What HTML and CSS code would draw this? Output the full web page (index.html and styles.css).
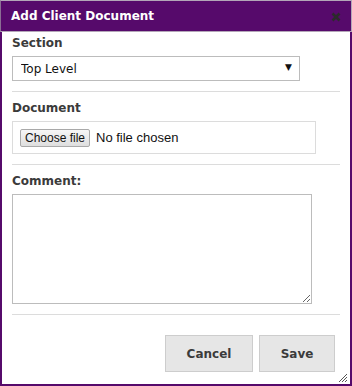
FILE: index.html
```html
<!DOCTYPE html>
<html lang="en">
<head>
    <meta charset="UTF-8">
    <meta name="viewport" content="width=device-width, initial-scale=1.0">
    <title>Add Client Document</title>
    <link rel="stylesheet" href="styles.css">
</head>
<body>

<div class="dialog">
    <div class="dialog-header">
        <span class="dialog-title">Add Client Document</span>
        <svg class="close" width="10" height="10" viewBox="0 0 10 10">
            <path d="M1.5 1.5 L8.5 8.5 M8.5 1.5 L1.5 8.5" stroke="#2b2b2b" stroke-width="2.6" stroke-linecap="butt"/>
        </svg>
    </div>

    <div class="dialog-body">
        <div class="field first">
            <label for="section">Section</label>
            <div class="select-wrap">
                <select id="section">
                    <option>Top Level</option>
                </select>
            </div>
        </div>

        <hr>

        <div class="field">
            <label for="document">Document</label>
            <div class="file-box">
                <button class="file-btn" id="document">Choose file</button>
                <span class="file-name">No file chosen</span>
            </div>
        </div>

        <hr>

        <div class="field">
            <label for="comment">Comment:</label>
            <textarea id="comment"></textarea>
        </div>

        <hr>

        <div class="buttons">
            <button class="btn">Cancel</button>
            <button class="btn">Save</button>
        </div>
    </div>

    <svg class="grip" width="10" height="10" viewBox="0 0 10 10">
        <path d="M1 9 L9 1 M4 9 L9 4 M7 9 L9 7" stroke="#555" stroke-width="1" fill="none"/>
    </svg>
</div>

</body>
</html>
```

FILE: styles.css
```css
* {
    margin: 0;
    padding: 0;
    box-sizing: border-box;
}

body {
    font-family: "DejaVu Sans", Verdana, sans-serif;
    background: #fff;
}

.dialog {
    position: relative;
    width: 352px;
    height: 386px;
    border: 2px solid #560a6b;
    border-top: 0;
    background: #fff;
}

.dialog-header {
    display: flex;
    justify-content: space-between;
    align-items: center;
    height: 32px;
    margin: 0 -2px;
    padding: 0 10px 0 10px;
    background: #560a6b;
    border: 1px solid #b3a6b8;
    border-left-color: #8a6e94;
}

.dialog-title {
    color: #fff;
    font-size: 12px;
    font-weight: bold;
}

.close {
    display: block;
    margin-top: 1px;
}

.dialog-body {
    padding: 3px 10px 0 10px;
}

label {
    display: block;
    height: 17px;
    line-height: 17px;
    font-size: 12px;
    font-weight: bold;
    color: #3b3b3b;
    margin-bottom: 4px;
}

hr {
    border: 0;
    border-top: 1px solid #dcdcdc;
    margin: 10px 0 8px 0;
}

.select-wrap {
    position: relative;
    width: 288px;
}

.select-wrap::after {
    content: "\25BC";
    position: absolute;
    right: 8px;
    top: 6px;
    font-size: 9px;
    color: #111;
    pointer-events: none;
}

select {
    appearance: none;
    -webkit-appearance: none;
    width: 288px;
    height: 25px;
    padding: 0 8px;
    border: 1px solid #bcbcbc;
    border-radius: 0;
    background: #fff;
    font-family: "DejaVu Sans", Verdana, sans-serif;
    font-size: 12px;
    color: #111;
}

.file-box {
    display: flex;
    align-items: center;
    width: 304px;
    height: 33px;
    padding: 0 7px;
    border: 1px solid #dcdcdc;
}

.file-btn {
    width: 70px;
    height: 18px;
    padding: 0;
    margin-right: 6px;
    border: 1px solid #a9a9a9;
    border-radius: 2px;
    background: linear-gradient(#f6f6f6, #dedede);
    font-family: "Liberation Sans", Arial, sans-serif;
    font-size: 12px;
    color: #111;
}

.file-name {
    font-family: "Liberation Sans", Arial, sans-serif;
    font-size: 13px;
    color: #111;
}

textarea {
    display: block;
    width: 300px;
    height: 110px;
    border: 1px solid #bcbcbc;
    resize: both;
    margin-bottom: 1px;
}

.buttons {
    display: flex;
    justify-content: flex-end;
    gap: 6px;
    padding: 12px 5px 0 0;
}

.btn {
    height: 37px;
    border: 1px solid #cdcdcd;
    background: #e6e6e6;
    font-family: "DejaVu Sans", Verdana, sans-serif;
    font-size: 12px;
    font-weight: bold;
    color: #3b3b3b;
}

.btn:first-child {
    width: 88px;
}

.btn:last-child {
    width: 76px;
}

.grip {
    position: absolute;
    right: 2px;
    bottom: 1px;
}
```
